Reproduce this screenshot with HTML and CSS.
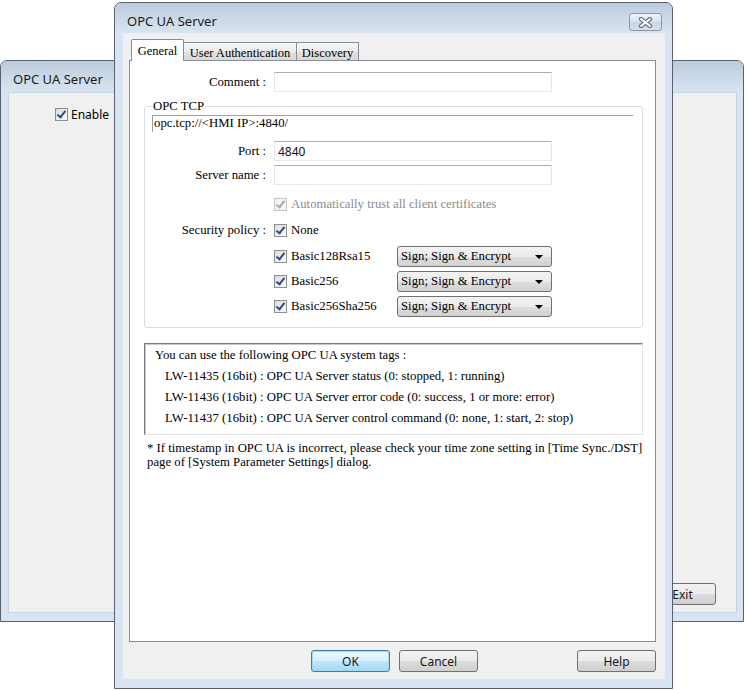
FILE: index.html
```html
<!DOCTYPE html>
<html lang="en">
    <head>
        <meta charset="UTF-8" />
        <meta name="viewport" content="width=device-width, initial-scale=1.0" />
        <title>OPC UA Server</title>
        <link rel="stylesheet" href="styles.css">
    </head>
    <body>
        <div class="desktop">
            <div class="window back-window">
                <div class="title-bar">
                    <span class="title">OPC UA Server</span>
                </div>
                <div class="client back-client">
                    <div class="enable-row">
                        <span class="checkbox checked"></span>
                        <span>Enable</span>
                    </div>
                    <div class="back-footer">
                        <button type="button" class="btn btn-exit">Exit</button>
                    </div>
                </div>
            </div>

            <div class="window dialog">
                <div class="title-bar">
                    <span class="title">OPC UA Server</span>
                    <span class="close-btn">
                        <svg width="15" height="11" viewBox="0 0 15 11">
                            <path d="M3 2 L12 9 M12 2 L3 9" stroke="#6b7684" stroke-width="4.4" stroke-linecap="round" fill="none" />
                            <path d="M3 2 L12 9 M12 2 L3 9" stroke="#ffffff" stroke-width="2" stroke-linecap="round" fill="none" />
                        </svg>
                    </span>
                </div>
                <div class="client dialog-client">
                    <div class="tabs">
                        <div class="tab active tab-general">General</div>
                        <div class="tab tab-auth">User Authentication</div>
                        <div class="tab tab-discovery">Discovery</div>
                    </div>
                    <div class="tab-panel">
                        <div class="form-row comment-row">
                            <label class="field-label" for="comment">Comment :</label>
                            <input type="text" id="comment" class="textbox" />
                        </div>

                        <fieldset class="group">
                            <legend>OPC TCP</legend>
                            <div class="url-box">opc.tcp://&lt;HMI IP&gt;:4840/</div>
                            <div class="form-row row-port">
                                <label class="field-label" for="port">Port :</label>
                                <input type="text" id="port" class="textbox" value="4840" />
                            </div>
                            <div class="form-row row-name">
                                <label class="field-label" for="server-name">Server name :</label>
                                <input type="text" id="server-name" class="textbox" />
                            </div>
                            <div class="check-row row-trust disabled">
                                <span class="checkbox checked"></span>
                                <span>Automatically trust all client certificates</span>
                            </div>
                            <div class="form-row row-policy">
                                <span class="field-label">Security policy :</span>
                                <span class="checkbox checked"></span>
                                <span class="check-text">None</span>
                            </div>
                            <div class="policy-row row-first">
                                <div class="policy-check">
                                    <span class="checkbox checked"></span>
                                    <span class="check-text">Basic128Rsa15</span>
                                </div>
                                <div class="combo"><span>Sign; Sign &amp; Encrypt</span><span class="arrow"></span></div>
                            </div>
                            <div class="policy-row">
                                <div class="policy-check">
                                    <span class="checkbox checked"></span>
                                    <span class="check-text">Basic256</span>
                                </div>
                                <div class="combo"><span>Sign; Sign &amp; Encrypt</span><span class="arrow"></span></div>
                            </div>
                            <div class="policy-row">
                                <div class="policy-check">
                                    <span class="checkbox checked"></span>
                                    <span class="check-text">Basic256Sha256</span>
                                </div>
                                <div class="combo"><span>Sign; Sign &amp; Encrypt</span><span class="arrow"></span></div>
                            </div>
                        </fieldset>

                        <div class="info-box">
                            <div>You can use the following OPC UA system tags :</div>
                            <div class="tag-line">LW-11435 (16bit) : OPC UA Server status (0: stopped, 1: running)</div>
                            <div class="tag-line">LW-11436 (16bit) : OPC UA Server error code (0: success, 1 or more: error)</div>
                            <div class="tag-line">LW-11437 (16bit) : OPC UA Server control command (0: none, 1: start, 2: stop)</div>
                        </div>
                        <p class="note">
                            * If timestamp in OPC UA is incorrect, please check your time zone setting in [Time Sync./DST]<br />
                            page of [System Parameter Settings] dialog.
                        </p>
                    </div>
                    <div class="button-group">
                        <button type="button" class="btn btn-ok">OK</button>
                        <button type="button" class="btn">Cancel</button>
                        <button type="button" class="btn btn-help">Help</button>
                    </div>
                </div>
            </div>
        </div>
    </body>
</html>
```

FILE: styles.css
```css
* {
    padding: 0;
    margin: 0;
    box-sizing: border-box;
}
body {
    width: 746px;
    height: 690px;
    overflow: hidden;
    background-color: #ffffff;
    font-family: 'Liberation Serif', serif;
    font-size: 12.75px;
    color: #000000;
}
.desktop {
    position: relative;
    width: 746px;
    height: 690px;
}

/* window frames */
.window {
    position: absolute;
    display: flex;
    flex-direction: column;
    border: 1px solid #56616d;
    border-radius: 7px 7px 0 0;
    background-color: #d8e4f1;
}
.back-window {
    left: 0;
    top: 60px;
    width: 744px;
    height: 562px;
}
.dialog {
    left: 114px;
    top: 2px;
    width: 559px;
    height: 687px;
}
.title-bar {
    flex: none;
    display: flex;
    align-items: flex-start;
    height: 31px;
    padding: 10px 0 0 12px;
    border-radius: 6px 6px 0 0;
    background: linear-gradient(#bccbdc, #cbd8e7 50%, #d8e4f1);
    font-family: 'Noto Sans', sans-serif;
    font-size: 13px;
    line-height: 16px;
    color: #1b1b1b;
}
.dialog .title-bar {
    height: 30px;
}
.close-btn {
    display: flex;
    align-items: center;
    justify-content: center;
    width: 33px;
    height: 18px;
    margin: 0 10px 0 auto;
    border: 1px solid #8d99a7;
    border-radius: 3px;
    background: linear-gradient(#eef3f8, #d7e1ec 50%, #c9d5e2 51%, #d5dfea);
}
.client {
    flex: 1;
    display: flex;
    flex-direction: column;
    background-color: #f0f0f0;
    border: 1px solid #c6d3e1;
}
.back-client {
    margin: 0 6px 8px 7px;
    font-family: 'Noto Sans', sans-serif;
    font-size: 12px;
}
.dialog-client {
    margin: 0 7px 9px 8px;
    padding: 6px 9px 0 6px;
    border: none;
}

/* background window */
.enable-row {
    display: flex;
    align-items: center;
    gap: 3px;
    margin: 14px 0 0 46px;
    height: 15px;
}
.back-footer {
    margin-top: auto;
    display: flex;
    justify-content: flex-end;
    padding: 0 20px 7px 0;
}
.btn-exit {
    width: 70px;
    padding-left: 12px;
}

/* tabs */
.tabs {
    display: flex;
    align-items: flex-end;
    height: 21px;
    margin-left: 2px;
}
.tab {
    height: 18px;
    padding-top: 2px;
    line-height: 16px;
    text-align: center;
    border: 1px solid #898c95;
    border-bottom: none;
    border-left: none;
    background: linear-gradient(#f6f6f6, #ececec 50%, #e1e1e1 51%, #d8d8d8);
    font-size: 12.5px;
    white-space: nowrap;
}
.tab.active {
    position: relative;
    z-index: 1;
    height: 22px;
    margin-bottom: -1px;
    padding-top: 3px;
    border-left: 1px solid #898c95;
    border-radius: 2px 2px 0 0;
    background: #ffffff;
}
.tab-general {
    width: 53px;
}
.tab-auth {
    width: 113px;
}
.tab-discovery {
    width: 62px;
}
.tab-panel {
    height: 582px;
    padding: 0 12px 0 14px;
    border: 1px solid #898c95;
    background-color: #ffffff;
}

/* form rows */
.form-row {
    display: flex;
    align-items: center;
    height: 20px;
}
.comment-row {
    margin-top: 11px;
}
.comment-row .field-label {
    width: 130px;
}
.field-label {
    flex: none;
    width: 129px;
    padding-right: 8px;
    text-align: right;
}
.textbox {
    width: 278px;
    height: 20px;
    padding: 0 3px;
    border: 1px solid #e3e9ef;
    border-top-color: #abadb3;
    font-family: 'Noto Sans', sans-serif;
    font-size: 12px;
    color: #111111;
    outline: none;
}

.group {
    margin-top: 7px;
    padding: 0 0 10px 0;
    border: 1px solid #d5dfe5;
    border-radius: 3px;
}
.group legend {
    margin-left: 7px;
    padding: 0 1px;
    font-weight: normal;
    line-height: 14px;
}
.url-box {
    height: 17px;
    margin: 2px 9px 0 7px;
    padding-left: 1px;
    line-height: 15px;
    border-top: 1px solid #a0a0a0;
    border-left: 1px solid #a0a0a0;
}
.row-port {
    margin-top: 9px;
}
.row-name {
    margin-top: 4px;
}
.check-row {
    display: flex;
    align-items: center;
    gap: 4px;
    height: 20px;
    margin: 9px 0 0 129px;
}
.check-row.disabled {
    color: #8b8b8b;
}
.row-policy {
    margin-top: 6px;
}
.check-text {
    margin-left: 4px;
}
.policy-row {
    display: flex;
    align-items: center;
    height: 21px;
    margin: 4px 0 0 129px;
}
.row-first {
    margin-top: 6px;
}
.policy-check {
    display: flex;
    align-items: center;
    width: 123px;
}

.checkbox {
    position: relative;
    flex: none;
    width: 13px;
    height: 13px;
    border: 1px solid #8e8f8f;
    background: linear-gradient(135deg, #dcdcdc, #fbfbfb);
}
.checkbox.checked::after {
    content: '';
    position: absolute;
    left: 3px;
    top: 0;
    width: 3px;
    height: 7px;
    border: solid #2d4b86;
    border-width: 0 2px 2px 0;
    transform: rotate(38deg);
}
.disabled .checkbox {
    border-color: #c4c4c4;
    background: #f4f4f4;
}
.disabled .checkbox.checked::after {
    border-color: #a9a9a9;
}

.combo {
    display: flex;
    align-items: center;
    justify-content: space-between;
    width: 155px;
    height: 21px;
    padding: 0 8px 0 3px;
    border: 1px solid #707070;
    border-radius: 3px;
    background: linear-gradient(#f3f3f3, #ebebeb 50%, #dddddd 51%, #d2d2d2);
}
.arrow {
    width: 0;
    height: 0;
    border-left: 4px solid transparent;
    border-right: 4px solid transparent;
    border-top: 4px solid #000000;
}

/* info */
.info-box {
    height: 92px;
    margin-top: 15px;
    padding: 1px 0 0 10px;
    line-height: 21px;
    border: 1px solid;
    border-color: #7a7a7a #e2e2e2 #e2e2e2 #7a7a7a;
    box-shadow: inset 1px 1px 0 #c8c8c8;
}
.tag-line {
    padding-left: 10px;
}
.note {
    margin-top: 6px;
    padding-left: 3px;
    line-height: 14px;
}

/* buttons */
.button-group {
    display: flex;
    gap: 9px;
    margin-top: 8px;
    padding-left: 182px;
}
.btn {
    width: 79px;
    height: 22px;
    border: 1px solid #707070;
    border-radius: 3px;
    background: linear-gradient(#f2f2f2, #ebebeb 50%, #dddddd 51%, #cfcfcf);
    font-family: 'Noto Sans', sans-serif;
    font-size: 12px;
    color: #1a1a1a;
}
.btn-ok {
    border-color: #3c7fb1;
    box-shadow: inset 0 0 0 1px #9fd6f5;
    background: linear-gradient(#eaf6fd, #d9f0fc 50%, #bee6fd 51%, #a7d9f5);
}
.btn-help {
    margin-left: auto;
}
```
